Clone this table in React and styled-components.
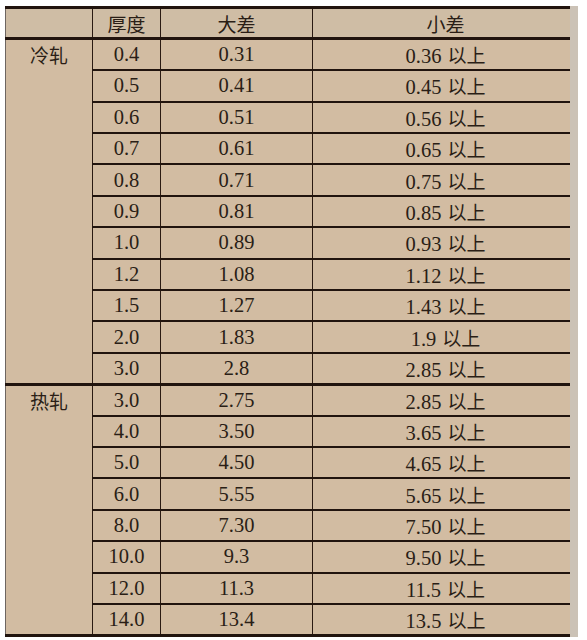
import React from 'react'
import styled, { createGlobalStyle } from 'styled-components'

const GlobalStyle = createGlobalStyle`
    html, body {
        margin: 0;
        padding: 0;
        background: #fff;
    }
`

const Page = styled.div`
    width: 587px;
    height: 640px;
    overflow: hidden;
    background: #fff;
    padding-top: 6px;
    box-sizing: border-box;
    font-family: 'Liberation Serif', 'Noto Sans CJK SC', serif;
    color: #2a1e16;
`

const Table = styled.table`
    margin-left: 5px;
    width: 573px;
    border-collapse: collapse;
    table-layout: fixed;
    background: #d2bca2;
    border-top: 3px solid #21140e;
    border-bottom: 3px solid #21140e;
    border-left: 1px solid #6d6560;
    border-right: 8px solid #cbc2b6;
`

const Row = styled.tr`
    height: 31.4px;
`

const HeadCell = styled.th`
    font-family: 'Noto Sans CJK SC', sans-serif;
    font-weight: 400;
    font-size: 19px;
    text-align: center;
    padding: ${p => (p.$pad ? `0 0 0 ${p.$pad}px` : '0')};
    background: #cfbda5;
    border-left: ${p => (p.$noLine ? '0' : '1px solid #2a1a12')};
    border-bottom: 3px solid #21140e;
`

const GroupCell = styled.td`
    font-family: 'Noto Sans CJK SC', sans-serif;
    font-size: 19px;
    text-align: center;
    vertical-align: top;
    line-height: 30px;
    padding: 0;
    border-top: ${p => (p.$first ? '0' : '3px solid #21140e')};
`

const Cell = styled.td`
    font-size: 20.5px;
    text-align: center;
    vertical-align: middle;
    padding: ${p => (p.$pad ? `0 0 0 ${p.$pad}px` : '0')};
    border-left: 1px solid #2a1a12;
    border-top: ${p => (p.$groupStart ? '3px' : '2px')} solid #21140e;
    white-space: nowrap;
`

const Cjk = styled.span`
    font-family: 'Noto Sans CJK SC', sans-serif;
    font-size: 19px;
    margin-left: 6px;
`

const groups = [
    {
        name: '冷轧',
        rows: [
            ['0.4', '0.31', '0.36'],
            ['0.5', '0.41', '0.45'],
            ['0.6', '0.51', '0.56'],
            ['0.7', '0.61', '0.65'],
            ['0.8', '0.71', '0.75'],
            ['0.9', '0.81', '0.85'],
            ['1.0', '0.89', '0.93'],
            ['1.2', '1.08', '1.12'],
            ['1.5', '1.27', '1.43'],
            ['2.0', '1.83', '1.9'],
            ['3.0', '2.8', '2.85'],
        ],
    },
    {
        name: '热轧',
        rows: [
            ['3.0', '2.75', '2.85'],
            ['4.0', '3.50', '3.65'],
            ['5.0', '4.50', '4.65'],
            ['6.0', '5.55', '5.65'],
            ['8.0', '7.30', '7.50'],
            ['10.0', '9.3', '9.50'],
            ['12.0', '11.3', '11.5'],
            ['14.0', '13.4', '13.5'],
        ],
    },
]

function App() {
    return (
        <Page>
            <GlobalStyle />
            <Table>
                <colgroup>
                    <col style={{ width: 87 }} />
                    <col style={{ width: 68 }} />
                    <col style={{ width: 152 }} />
                    <col />
                </colgroup>
                <thead>
                    <Row>
                        <HeadCell $noLine />
                        <HeadCell>厚度</HeadCell>
                        <HeadCell>大差</HeadCell>
                        <HeadCell $pad={8}>小差</HeadCell>
                    </Row>
                </thead>
                <tbody>
                    {groups.map((g, gi) =>
                        g.rows.map((r, i) => (
                            <Row key={g.name + i}>
                                {i === 0 && (
                                    <GroupCell rowSpan={g.rows.length} $first={gi === 0}>
                                        {g.name}
                                    </GroupCell>
                                )}
                                <Cell $groupStart={i === 0 && gi > 0}>{r[0]}</Cell>
                                <Cell $groupStart={i === 0 && gi > 0}>{r[1]}</Cell>
                                <Cell $groupStart={i === 0 && gi > 0} $pad={8}>
                                    {r[2]}
                                    <Cjk>以上</Cjk>
                                </Cell>
                            </Row>
                        ))
                    )}
                </tbody>
            </Table>
        </Page>
    )
}

export default App
